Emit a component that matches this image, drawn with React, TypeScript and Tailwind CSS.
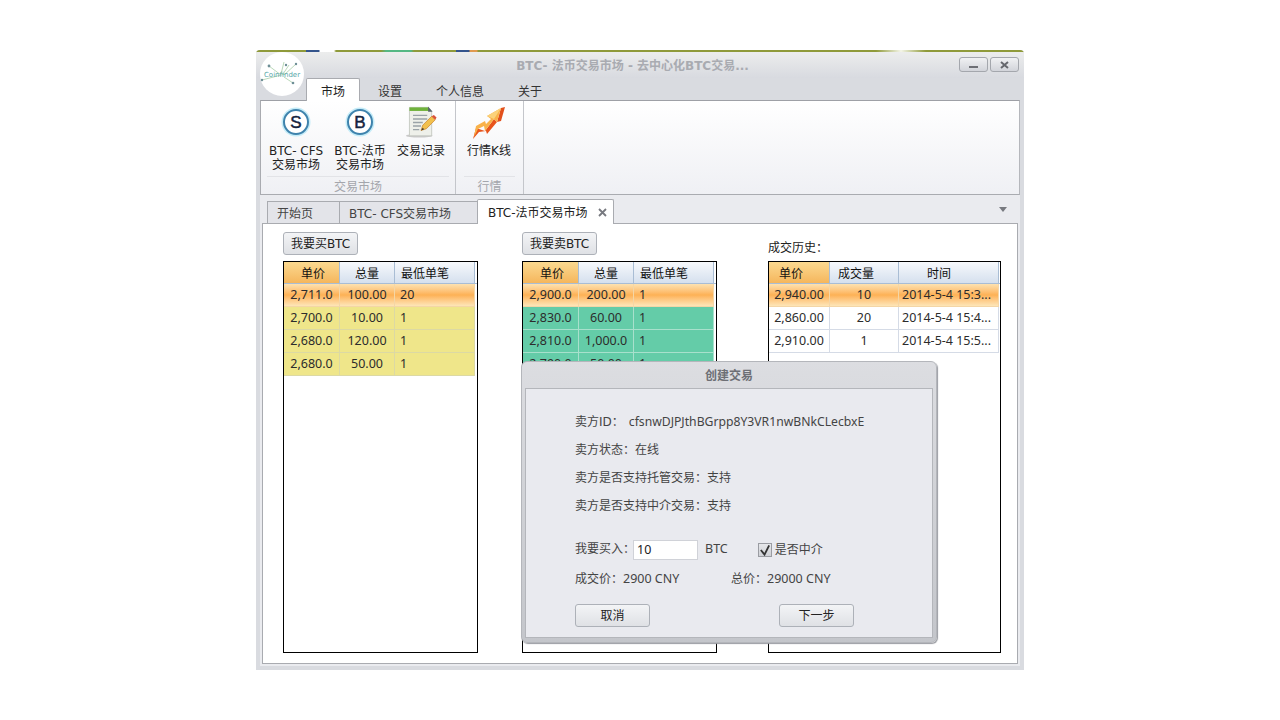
import React from "react";

const FONT = '"DejaVu Sans","Noto Sans CJK SC",sans-serif';

type Col = { label: string; w: number; align: string; pl: number; hl?: boolean };
type Row = { cells: string[]; sel?: boolean };

function Grid({ cols, rows, bg, borderColor }: { cols: Col[]; rows: Row[]; bg: string; borderColor: string }) {
  return (
    <div className="h-[392px] border border-black bg-white overflow-hidden">
      <div className="flex h-[22px] border-b border-[#a9bdd4]">
        {cols.map((c, i) => (
          <div
            key={i}
            style={{ width: c.w, paddingLeft: c.pl }}
            className={
              "shrink-0 flex items-center pt-[2px] border-r border-[#a9bdd4] text-[12px] text-[#111] " +
              (c.hl ? "bg-gradient-to-b from-[#fbd98f] to-[#f5b65c]" : "bg-gradient-to-b from-[#f7f9fc] to-[#d5e0ee]")
            }
          >
            {c.label}
          </div>
        ))}
      </div>
      {rows.map((r, i) => (
        <div key={i} className="flex h-[23px]" style={{ width: cols.reduce((a, c) => a + c.w, 0) }}>
          {r.cells.map((t, j) => (
            <div
              key={j}
              style={{ width: cols[j].w, backgroundColor: r.sel ? undefined : bg, borderColor: r.sel ? "#f4d6a6" : borderColor }}
              className={
                "shrink-0 flex items-center pt-[1px] border-r border-b font-['Noto_Sans',sans-serif] text-[12.5px] text-[#2c2c2c] whitespace-nowrap " +
                cols[j].align +
                (r.sel ? " bg-gradient-to-b from-[#fde2b0] via-[#fdb155] to-[#fde6b8]" : "")
              }
            >
              {t}
            </div>
          ))}
        </div>
      ))}
    </div>
  );
}

function Coin({ letter }: { letter: string }) {
  return (
    <svg width="30" height="30" viewBox="0 0 30 30">
      <circle cx="15" cy="15" r="14.5" fill="#c5ecf8" />
      <circle cx="15" cy="15" r="12" fill="#fff" stroke="#3f83ad" strokeWidth="2" />
      <text x="15" y="21" textAnchor="middle" fontSize="17" fontWeight="400" fill="#14233f" stroke="#14233f" strokeWidth="0.5" fontFamily="Liberation Sans">{letter}</text>
    </svg>
  );
}

function DocIcon() {
  return (
    <svg width="32" height="33" viewBox="0 0 36 36">
      <ellipse cx="16" cy="33" rx="15" ry="2" fill="#c9c9c9" />
      <path d="M5 1H26L30 5V33H5Z" fill="#eef0ea" stroke="#c4c8c0" />
      <rect x="5" y="1" width="22" height="4" fill="#6fb23c" />
      <path d="M26 0L31 6H26Z" fill="#58646b" />
      <path d="M9 10H25M9 14H25M9 18H20M9 22H18M9 26H16" stroke="#9aa3a8" strokeWidth="1.6" />
      <path d="M18 27L20 21L30 11L34 15L24 25Z" fill="#f2c04c" stroke="#c9822a" strokeWidth="0.8" />
      <path d="M30 11L34 15L35.5 12.5L32.5 9.5Z" fill="#d9533a" />
      <path d="M18 27L20 24L21.5 25.5Z" fill="#333" />
    </svg>
  );
}

function ChartIcon() {
  return (
    <svg width="33" height="33" viewBox="0 0 33 33">
      <path d="M28 2L32 1L28 15L24 16Z" fill="#e2501c" />
      <path d="M12 25L21 13L24 16L14 28L13 25L6 26L0 33L3 22L12 25Z" fill="#e8541c" />
      <path d="M14 10L28 2L24 16L21 13L12 25L11 20L5 23L1 31L3 20L12 15L13 18L18 13Z" fill="#f9b24a" />
      <path d="M14 10L28 2L21 13Z" fill="#fbd27a" />
    </svg>
  );
}

function Logo() {
  return (
    <div className="absolute left-[4px] top-[2px] w-[44px] h-[44px] rounded-full bg-white z-10">
      <svg width="44" height="44" viewBox="0 0 44 44" className="block">
        <path d="M2 28L25 22M9 14L21 23M29 13L23 22M24 10L21 22M36 12L24 23M24 25L33 31" stroke="#9cc79a" strokeWidth="0.7" fill="none" />
        <g fill="#6e8f96">
          <circle cx="2" cy="28" r="1.2" />
          <circle cx="9" cy="14" r="1.4" />
          <circle cx="26" cy="13" r="1.2" />
          <circle cx="36" cy="12" r="1.2" />
          <circle cx="33" cy="31" r="1.3" />
        </g>
        <text x="22" y="25" textAnchor="middle" fontSize="7" fill="#56a6a8" fontFamily="DejaVu Sans">Coinfinder</text>
      </svg>
    </div>
  );
}

function RibbonBtn({ icon, l1, l2, w }: { icon: React.ReactNode; l1: string; l2?: string; w: number }) {
  return (
    <div style={{ width: w }} className="flex flex-col items-center pt-[3px] text-[12px] leading-[14px] text-[#222] whitespace-nowrap">
      <div className="h-[36px] flex items-center justify-center">{icon}</div>
      <div className="mt-[4px]">{l1}</div>
      {l2 && <div>{l2}</div>}
    </div>
  );
}

function Btn({ children, w }: { children: React.ReactNode; w: number }) {
  return (
    <div
      style={{ width: w }}
      className="h-[23px] flex items-center justify-center rounded-[3px] border border-[#adb1b8] bg-gradient-to-b from-[#f3f4f6] to-[#dfe1e5] text-[12px] text-[#222]"
    >
      {children}
    </div>
  );
}

const bookCols: Col[] = [
  { label: "单价", w: 56, align: "justify-center", pl: 17, hl: true },
  { label: "总量", w: 55, align: "justify-center", pl: 15 },
  { label: "最低单笔", w: 80, align: "justify-start pl-[5px]", pl: 6 },
];

const histCols: Col[] = [
  { label: "单价", w: 61, align: "justify-center", pl: 10, hl: true },
  { label: "成交量", w: 69, align: "justify-center", pl: 8 },
  { label: "时间", w: 100, align: "justify-start pl-[3px]", pl: 28 },
];

export default function App() {
  return (
    <div className="w-[1280px] h-[720px] bg-white pt-[50px] overflow-hidden" style={{ fontFamily: FONT }}>
      <div className="relative w-[768px] h-[620px] ml-[256px] bg-[#d9dbe0] rounded-t-[4px] flex flex-col overflow-hidden">
        <div className="h-[2px] shrink-0 bg-[linear-gradient(90deg,#8f9a3a_0,#8f9a3a_50px,#34558c_50px,#34558c_63px,#fff_64px,#fff_78px,#8f9a3a_80px,#8f9a3a_125px,#55b884_130px,#55b884_155px,#8f9a3a_158px,#8f9a3a_200px,#34558c_200px,#34558c_213px,#e09a50_214px,#e09a50_221px,#8f9a3a_222px,#8f9a3a_620px,#f4f5e8_645px,#8f9a3a_670px,#8f9a3a_100%)]" />
        <Logo />
        {/* title bar */}
        <div className="relative h-[26px] shrink-0 flex items-center justify-center pr-[15px] pt-[1px] bg-gradient-to-b from-[#eceded] to-[#d8dae0]">
          <span className="text-[12px] font-bold text-[#a9abb1]">BTC- 法币交易市场 - 去中心化BTC交易...</span>
          <div className="absolute right-[5px] top-[5px] flex gap-[2px]">
            <div className="w-[29px] h-[15px] rounded-[3px] border border-[#a4a7ad] bg-gradient-to-b from-[#f0f1f3] to-[#d2d4da] flex items-center justify-center">
              <div className="w-[9px] h-[2px] mt-[4px] bg-[#6d6f75]" />
            </div>
            <div className="w-[29px] h-[15px] rounded-[3px] border border-[#a4a7ad] bg-gradient-to-b from-[#f0f1f3] to-[#d2d4da] flex items-center justify-center">
              <svg width="9" height="8" viewBox="0 0 9 8"><path d="M1 1L8 7M8 1L1 7" stroke="#66686e" strokeWidth="2" /></svg>
            </div>
          </div>
        </div>
        {/* menu tabs */}
        <div className="h-[22px] shrink-0 flex pl-[50px] text-[12px] text-[#333]">
          <div className="w-[54px] h-[23px] pt-[3px] relative z-10 flex items-center justify-center bg-white border border-b-0 border-[#a9abb0] rounded-t-[2px] text-[#222]">市场</div>
          <div className="w-[60px] pt-[5px] flex items-center justify-center">设置</div>
          <div className="w-[80px] pt-[5px] flex items-center justify-center">个人信息</div>
          <div className="w-[10px]" />
          <div className="w-[40px] pt-[5px] flex items-center justify-center">关于</div>
        </div>
        {/* ribbon */}
        <div className="h-[95px] shrink-0 mx-[4px] border border-[#a9abb0] border-r-[#b5b7bc] border-t-[#9ea0a6] bg-gradient-to-b from-white to-[#eff0f4] flex">
          <div className="w-[195px] border-r border-[#c4c6cb] flex flex-col">
            <div className="flex-1 flex pl-[2px]">
              <RibbonBtn w={66} icon={<Coin letter="S" />} l1="BTC- CFS" l2="交易市场" />
              <RibbonBtn w={62} icon={<Coin letter="B" />} l1="BTC-法币" l2="交易市场" />
              <RibbonBtn w={60} icon={<DocIcon />} l1="交易记录" />
            </div>
            <div className="h-[18px] mx-[6px] border-t border-[#e2e3e7] text-center text-[12px] leading-[21px] text-[#a4a6ac]">交易市场</div>
          </div>
          <div className="w-[68px] border-r border-[#c4c6cb] flex flex-col">
            <div className="flex-1 flex">
              <RibbonBtn w={66} icon={<ChartIcon />} l1="行情K线" />
            </div>
            <div className="h-[18px] mx-[8px] border-t border-[#e2e3e7] text-center text-[12px] leading-[21px] text-[#a4a6ac]">行情</div>
          </div>
        </div>
        {/* document tabs */}
        <div className="relative h-[28px] shrink-0 mx-[4px] flex items-end pl-[7px] bg-[#eaebef] text-[12px] text-[#444]">
          <div className="w-[73px] h-[22px] pl-[9px] pt-[2px] flex items-center border border-b-0 border-[#a9abb0] bg-[#e3e4e9]">开始页</div>
          <div className="w-[139px] h-[22px] pl-[9px] pt-[2px] -ml-px flex items-center border border-b-0 border-[#a9abb0] bg-[#e3e4e9]">BTC- CFS交易市场</div>
          <div className="relative z-10 w-[137px] h-[25px] -ml-px -mb-px pl-[10px] pt-[2px] flex items-center border border-b-0 border-[#a9abb0] bg-white text-[#222] rounded-t-[2px]">
            BTC-法币交易市场
            <svg className="absolute right-[6px] top-[8px]" width="9" height="9" viewBox="0 0 9 9"><path d="M1 1L8 8M8 1L1 8" stroke="#77797f" strokeWidth="1.8" /></svg>
          </div>
          <svg className="absolute right-[13px] top-[12px]" width="8" height="5" viewBox="0 0 8 5"><path d="M0 0H8L4 5Z" fill="#77797f" /></svg>
        </div>
        {/* content */}
        <div className="flex-1 mx-[4px] mb-[4px] px-[2px] pb-[2px] bg-[#eaebef]">
          <div className="relative h-full border border-[#a9abb0] bg-white flex pl-[20px] pt-[8px] text-[12px] text-[#222]">
            <div className="w-[195px] mr-[44px] flex flex-col gap-[6px]">
              <Btn w={75}>我要买BTC</Btn>
              <Grid
                cols={bookCols}
                bg="#efe68a"
                borderColor="#dcd9a4"
                rows={[
                  { cells: ["2,711.0", "100.00", "20"], sel: true },
                  { cells: ["2,700.0", "10.00", "1"] },
                  { cells: ["2,680.0", "120.00", "1"] },
                  { cells: ["2,680.0", "50.00", "1"] },
                ]}
              />
            </div>
            <div className="w-[195px] mr-[51px] flex flex-col gap-[6px]">
              <Btn w={75}>我要卖BTC</Btn>
              <Grid
                cols={bookCols}
                bg="#64cca8"
                borderColor="#a8e0cc"
                rows={[
                  { cells: ["2,900.0", "200.00", "1"], sel: true },
                  { cells: ["2,830.0", "60.00", "1"] },
                  { cells: ["2,810.0", "1,000.0", "1"] },
                  { cells: ["2,790.0", "50.00", "1"] },
                ]}
              />
            </div>
            <div className="w-[233px] flex flex-col gap-[6px]">
              <div className="h-[23px] flex items-center pt-[9px] text-[12px] text-[#222]">成交历史：</div>
              <Grid
                cols={histCols}
                bg="#ffffff"
                borderColor="#d5dbe6"
                rows={[
                  { cells: ["2,940.00", "10", "2014-5-4 15:3..."], sel: true },
                  { cells: ["2,860.00", "20", "2014-5-4 15:4..."] },
                  { cells: ["2,910.00", "1", "2014-5-4 15:5..."] },
                ]}
              />
            </div>
            {/* dialog */}
            <div className="absolute left-[258px] top-[137px] w-[416px] h-[282px] rounded-[6px] bg-gradient-to-b from-[#dcdde1] to-[#c4c6cb] border border-[#b4b6bb] shadow-[1px_1px_1px_#9a9ca2] flex flex-col">
              <div className="h-[26px] shrink-0 flex items-center justify-center pt-[2px] text-[12px] font-bold text-[#6d6f75]">创建交易</div>
              <div className="flex-1 mx-[3px] mb-[4px] border border-[#b4b6bb] bg-[#e9eaef] pt-[19px] text-[#444] text-[12px] relative">
                <div className="pl-[49px] flex flex-col">
                  <div className="h-[28px] flex items-center">卖方ID：<span className="ml-[5px] font-['Noto_Sans',sans-serif] text-[12.2px]">cfsnwDJPJthBGrpp8Y3VR1nwBNkCLecbxE</span></div>
                  <div className="h-[28px] flex items-center">卖方状态：在线</div>
                  <div className="h-[28px] flex items-center">卖方是否支持托管交易：支持</div>
                  <div className="h-[28px] flex items-center">卖方是否支持中介交易：支持</div>
                </div>
                <div className="pl-[49px] mt-[19px] flex items-center h-[22px]">
                  <span className="w-[58px] whitespace-nowrap -mt-[3px]">我要买入：</span>
                  <div className="w-[65px] h-[20px] bg-white border border-[#d0d2d8] flex items-center pl-[3px] font-['Noto_Sans',sans-serif] text-[12.5px] text-[#222]">10</div>
                  <span className="ml-[7px] font-['Noto_Sans',sans-serif] text-[12.5px] -mt-[2px]">BTC</span>
                  <div className="ml-[30px] flex items-center gap-[3px]">
                    <div className="w-[14px] h-[14px] border border-[#9a9ca2] bg-gradient-to-b from-[#e6e7ea] to-[#cfd1d6] flex items-center justify-center">
                      <svg width="13" height="13" viewBox="0 0 13 13"><path d="M2 6L6 11L11 1" fill="none" stroke="#333" strokeWidth="2" /></svg>
                    </div>
                    <span>是否中介</span>
                  </div>
                </div>
                <div className="pl-[49px] mt-[7px] flex h-[22px] items-center">
                  <span className="w-[156px] flex items-center">成交价：<span className="font-['Noto_Sans',sans-serif] text-[12.5px]">2900 CNY</span></span>
                  <span className="flex items-center">总价：<span className="font-['Noto_Sans',sans-serif] text-[12.5px]">29000 CNY</span></span>
                </div>
                <div className="absolute left-[49px] bottom-[10px]"><Btn w={75}>取消</Btn></div>
                <div className="absolute left-[253px] bottom-[10px]"><Btn w={75}>下一步</Btn></div>
              </div>
            </div>
          </div>
        </div>
      </div>
    </div>
  );
}
